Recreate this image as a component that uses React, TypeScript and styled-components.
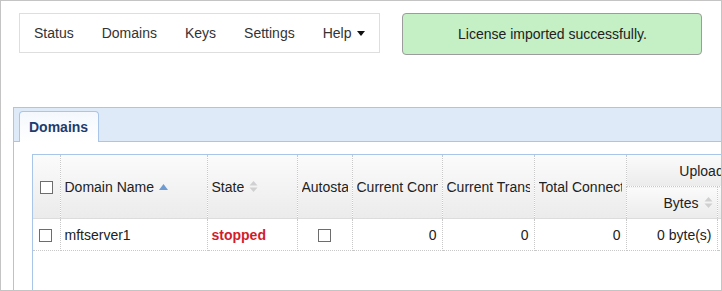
import React, { FC } from 'react'
import styled, { createGlobalStyle } from 'styled-components'

const GlobalStyle = createGlobalStyle`
  html, body {
    margin: 0;
    padding: 0;
    background: #fff;
  }
  body {
    font-family: "Liberation Sans", Arial, sans-serif;
    font-size: 14px;
    color: #222;
  }
`

const navItems = ['Status', 'Domains', 'Keys', 'Settings']

type Col = { label: string; width: number; sort?: 'asc' | 'none' }

const cols: Col[] = [
  { label: 'Domain Name', width: 147, sort: 'asc' },
  { label: 'State', width: 90, sort: 'none' },
  { label: 'Autostart', width: 55 },
  { label: 'Current Connections', width: 90 },
  { label: 'Current Transfers', width: 92 },
  { label: 'Total Connections', width: 92 },
]

const SortIcon: FC<{ dir: 'asc' | 'none' }> = ({ dir }) =>
  dir === 'asc' ? (
    <Sort width="9" height="6" viewBox="0 0 9 6">
      <path d="M0 6 L4.5 0 L9 6 Z" fill="#6f9bd3" />
    </Sort>
  ) : (
    <Sort width="9" height="11" viewBox="0 0 9 11">
      <path d="M0.5 4.5 L4.5 0 L8.5 4.5 Z M0.5 6.5 L4.5 11 L8.5 6.5 Z" fill="#d0d0d0" />
    </Sort>
  )

const App: FC = () => {
  return (
    <Frame>
      <GlobalStyle />
      <Top>
        <Nav>
          {navItems.map((n) => (
            <NavItem key={n}>{n}</NavItem>
          ))}
          <NavItem>
            Help
            <Caret />
          </NavItem>
        </Nav>
        <Alert>License imported successfully.</Alert>
      </Top>

      <Panel>
        <TabBar>
          <Tab>Domains</Tab>
        </TabBar>
        <Content>
          <GridBox>
            <Grid>
              <colgroup>
                <col style={{ width: 27 }} />
                {cols.map((c) => (
                  <col key={c.label} style={{ width: c.width }} />
                ))}
                <col style={{ width: 91 }} />
                <col style={{ width: 60 }} />
              </colgroup>
              <thead>
                <tr>
                  <Th rowSpan={2} $align="center">
                    <Check />
                  </Th>
                  {cols.map((c) => (
                    <Th key={c.label} rowSpan={2}>
                      <HeadLabel>
                        <Clip>{c.label}</Clip>
                        {c.sort && <SortIcon dir={c.sort} />}
                      </HeadLabel>
                    </Th>
                  ))}
                  <Th colSpan={2} $align="center" $sub>
                    Upload
                  </Th>
                </tr>
                <tr>
                  <Th $align="right">
                    <HeadLabel>
                      Bytes
                      <SortIcon dir="none" />
                    </HeadLabel>
                  </Th>
                  <Th $align="right">Files</Th>
                </tr>
              </thead>
              <tbody>
                <tr>
                  <Td $align="center">
                    <Check />
                  </Td>
                  <Td>mftserver1</Td>
                  <Td>
                    <Stopped>stopped</Stopped>
                  </Td>
                  <Td $align="center">
                    <Check />
                  </Td>
                  <Td $align="right">0</Td>
                  <Td $align="right">0</Td>
                  <Td $align="right">0</Td>
                  <Td $align="right">0 byte(s)</Td>
                  <Td $align="right">0</Td>
                </tr>
              </tbody>
            </Grid>
          </GridBox>
        </Content>
      </Panel>
    </Frame>
  )
}

export default App

const Frame = styled.div`
  width: 722px;
  height: 291px;
  box-sizing: border-box;
  border: 1px solid #c4c4c4;
  overflow: hidden;
  display: flex;
  flex-direction: column;
`

const Top = styled.div`
  display: flex;
  align-items: flex-start;
  gap: 22px;
  padding: 12px 0 0 18px;
`

const Nav = styled.nav`
  display: flex;
  align-items: center;
  height: 40px;
  box-sizing: border-box;
  border: 1px solid #dedede;
  background: #fff;
`

const NavItem = styled.span`
  display: flex;
  align-items: center;
  padding: 0 14px;
  color: #333;
  font-size: 14px;
`

const Caret = styled.span`
  display: inline-block;
  margin-left: 6px;
  width: 0;
  height: 0;
  border-left: 4px solid transparent;
  border-right: 4px solid transparent;
  border-top: 5px solid #111;
`

const Alert = styled.div`
  width: 300px;
  height: 42px;
  box-sizing: border-box;
  border: 1px solid #9c9c9c;
  border-radius: 4px;
  background: #c5efc5;
  color: #222;
  display: flex;
  align-items: center;
  justify-content: center;
`

const Panel = styled.section`
  margin: 52px 0 0 12px;
  width: 820px;
  flex: 1;
  border-top: 1px solid #a9c6e8;
  border-left: 1px solid #a9c6e8;
  display: flex;
  flex-direction: column;
`

const TabBar = styled.div`
  display: flex;
  align-items: flex-end;
  height: 33px;
  padding-left: 5px;
  background: #dfeaf8;
  border-bottom: 1px solid #a9c6e8;
`

const Tab = styled.div`
  width: 80px;
  height: 31px;
  box-sizing: border-box;
  margin-bottom: -1px;
  padding-left: 9px;
  display: flex;
  align-items: center;
  border: 1px solid #a9c6e8;
  border-bottom: none;
  border-radius: 4px 4px 0 0;
  background: linear-gradient(#f4f8fd, #fff);
  color: #1d3c6f;
  font-weight: bold;
  font-size: 14px;
`

const Content = styled.div`
  flex: 1;
  display: flex;
  background: #fff;
  padding: 12px 0 0 18px;
`

const GridBox = styled.div`
  flex: 1;
  border-top: 1px solid #a9c6e8;
  border-left: 1px solid #a9c6e8;
`

const Grid = styled.table`
  border-collapse: collapse;
  table-layout: fixed;
  width: 744px;
`

const Th = styled.th<{ $align?: 'left' | 'right' | 'center'; $sub?: boolean }>`
  height: 31px;
  padding: 0 4px;
  background: linear-gradient(#fbfbfb, #ebebeb);
  font-weight: normal;
  color: #222;
  text-align: ${(p) => p.$align ?? 'left'};
  white-space: nowrap;
  overflow: hidden;
  border-right: 1px dotted #c8c8c8;
  border-bottom: 1px ${(p) => (p.$sub ? 'dotted #c8c8c8' : 'solid #dcdcdc')};
  vertical-align: middle;
`

const HeadLabel = styled.span`
  display: inline-flex;
  align-items: center;
  gap: 5px;
  max-width: 100%;
`

const Clip = styled.span`
  overflow: hidden;
  white-space: nowrap;
`

const Sort = styled.svg`
  display: block;
  flex: none;
`

const Td = styled.td<{ $align?: 'left' | 'right' | 'center' }>`
  height: 31px;
  padding: 0 5px 0 4px;
  text-align: ${(p) => p.$align ?? 'left'};
  white-space: nowrap;
  overflow: hidden;
  border-right: 1px dotted #c8c8c8;
  border-bottom: 1px dotted #c8c8c8;
  vertical-align: middle;
`

const Check = styled.span`
  display: inline-block;
  width: 13px;
  height: 13px;
  box-sizing: border-box;
  border: 1px solid #6d6d6d;
  background: #fff;
  vertical-align: middle;
`

const Stopped = styled.span`
  color: #d21c2c;
  font-weight: bold;
`
